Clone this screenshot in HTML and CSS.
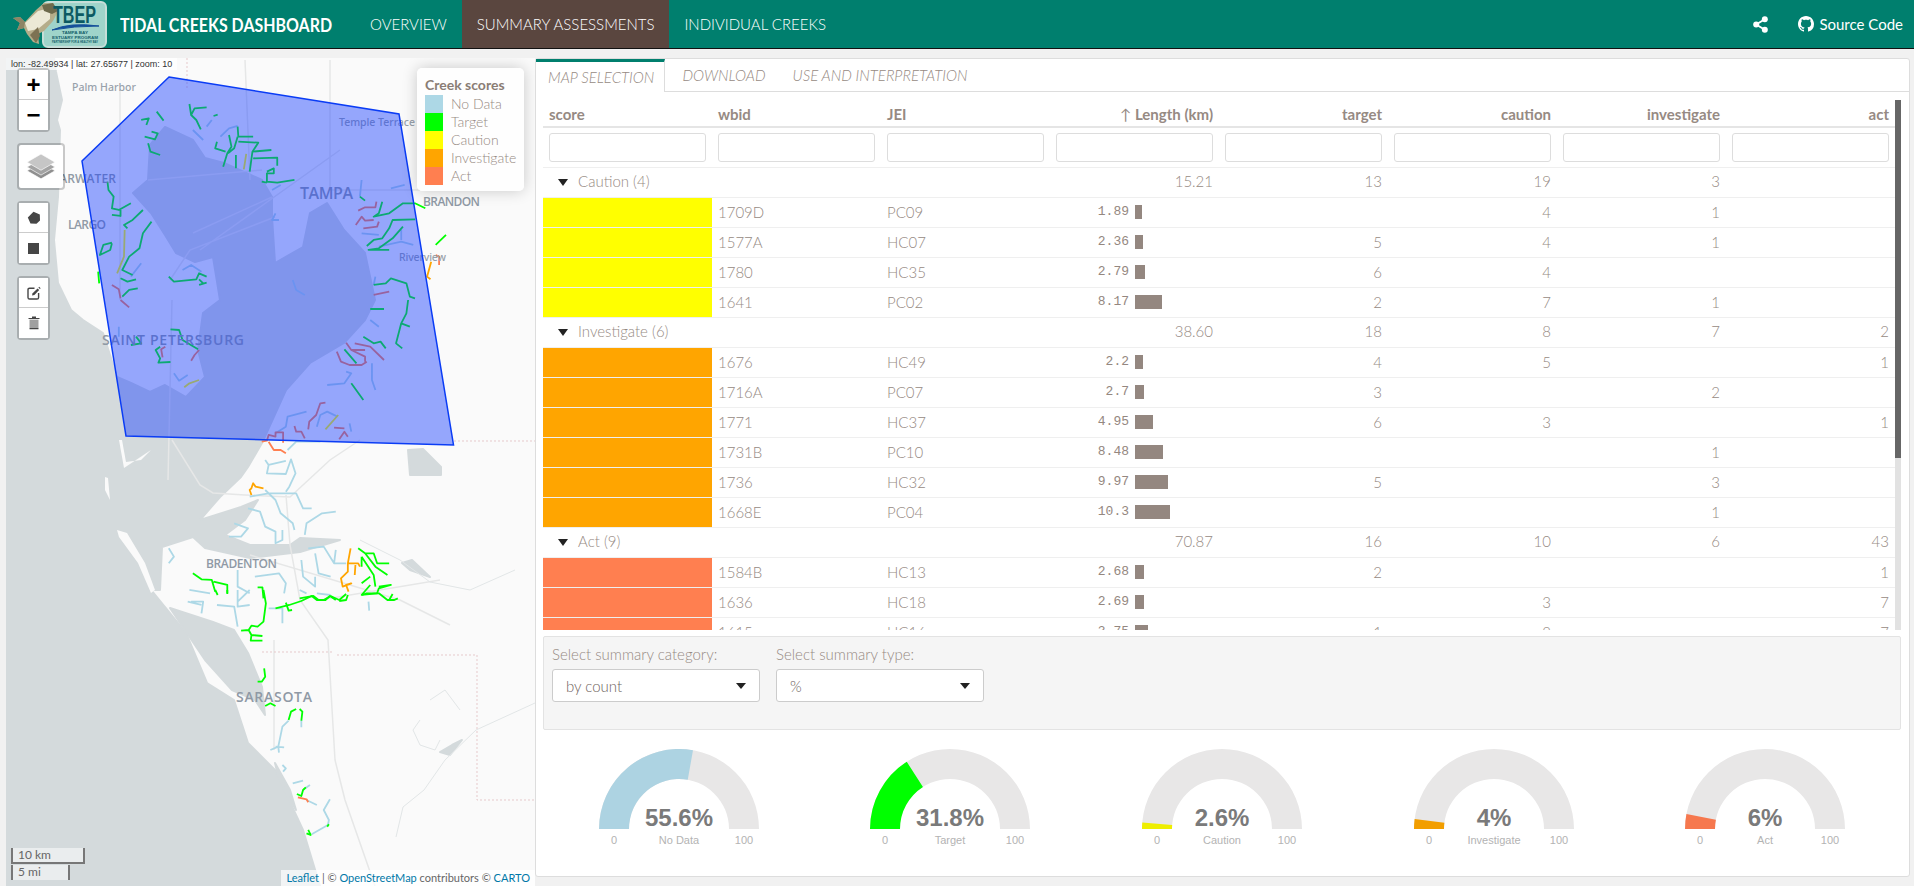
FILE: index.html
```html
<!DOCTYPE html>
<html lang="en">
<head>
  <meta charset="UTF-8" />
  <meta name="viewport" content="width=device-width, initial-scale=1.0" />
  <title>Tidal Creeks Dashboard</title>
  <link rel="stylesheet" href="styles.css">
</head>
<body>

  <!-- Top bar -->
  <nav class="navbar">
    <svg class="logo" viewBox="0 0 110 48" aria-label="TBEP logo">
      <rect x="43" y="2" width="63" height="45" rx="5" fill="#9fd4ca" stroke="#c6ded8" stroke-width="2"/>
      <path d="M13 18 L20 17 L25 22 L36 10 L44 3 L53 3 L58 11 L53 21 L44 31 L38 34 L39 44 L33 42 L27 34 L24 28 L17 30 L20 23 Z" fill="#b5ad8a"/>
      <path d="M25 23 L38 11 L50 8 L50 19 L38 29 L28 31 Z" fill="#ece9d6"/>
      <path d="M42 5 L53 3 L58 11 L52 14 L44 11 Z" fill="#6d6a4c"/>
      <path d="M30 35 L38 27 L40 36 L36 43 Z" fill="#7d7252"/>
      <path d="M13 18 L20 17 L25 22 L24 28 L17 30 L20 23 Z" fill="#8d8566"/>
      <text class="logo-big" x="53" y="23" textLength="43" lengthAdjust="spacingAndGlyphs">TBEP</text>
      <path d="M52 30 Q70 22 99 26 Q74 26 52 30 Z" fill="#14509a" stroke="#14509a"/>
      <text class="logo-small" x="62" y="33.5" textLength="26" lengthAdjust="spacingAndGlyphs">TAMPA BAY</text>
      <text class="logo-small" x="52" y="38.5" textLength="46" lengthAdjust="spacingAndGlyphs">ESTUARY PROGRAM</text>
      <text class="logo-tiny" x="52" y="43" textLength="46" lengthAdjust="spacingAndGlyphs">PARTNERSHIP FOR A HEALTHY BAY</text>
    </svg>
    <span class="brand">TIDAL CREEKS DASHBOARD</span>
    <ul class="nav-links">
      <li>OVERVIEW</li>
      <li class="active">SUMMARY ASSESSMENTS</li>
      <li>INDIVIDUAL CREEKS</li>
    </ul>
    <div class="nav-right">
      <svg class="share-icon" viewBox="0 0 16 18">
        <circle cx="12.6" cy="3.4" r="3.2"/><circle cx="3.4" cy="9" r="3.2"/><circle cx="12.6" cy="14.6" r="3.2"/>
        <path d="M12.6 3.4 L3.4 9 L12.6 14.6" fill="none" stroke="#fff" stroke-width="2"/>
      </svg>
      <span class="source">
        <svg class="github-icon" viewBox="0 0 16 16">
          <path d="M8 0C3.58 0 0 3.58 0 8c0 3.54 2.29 6.53 5.47 7.59.4.07.55-.17.55-.38 0-.19-.01-.82-.01-1.49-2.01.37-2.53-.49-2.69-.94-.09-.23-.48-.94-.82-1.13-.28-.15-.68-.52-.01-.53.63-.01 1.08.58 1.23.82.72 1.21 1.87.87 2.33.66.07-.52.28-.87.51-1.07-1.78-.2-3.64-.89-3.64-3.95 0-.87.31-1.59.82-2.15-.08-.2-.36-1.02.08-2.12 0 0 .67-.21 2.2.82.64-.18 1.32-.27 2-.27s1.36.09 2 .27c1.53-1.04 2.2-.82 2.2-.82.44 1.1.16 1.92.08 2.12.51.56.82 1.27.82 2.15 0 3.07-1.87 3.75-3.65 3.95.29.25.54.73.54 1.48 0 1.07-.01 1.93-.01 2.2 0 .21.15.46.55.38A8.01 8.01 0 0 0 16 8c0-4.42-3.58-8-8-8z"/>
        </svg>
        Source Code
      </span>
    </div>
  </nav>

  <div class="layout">

    <!-- Map -->
    <section class="map">
      <svg class="map-canvas" viewBox="6 58 529 828" preserveAspectRatio="none">
        <rect class="land" x="6" y="58" width="529" height="828"/>

        <!-- water -->
        <path class="water" d="M6 58 L54 58 L56 72 L62 100 L57 120 L60 130 L58 197 L54 240 L58 283 L71 310 L83 320 L103 333 L117 377 L131 383 L150 392 L165 385 L186 397 L205 377 L198 350 L203 313 L220 300 L213 257 L195 262 L176 253 L165 235 L151 213 L133 193 L148 180 L150 145 L165 127 L193 140 L205 158 L224 163 L262 180 L272 197 L272 217 L275 263 L303 247 L310 213 L327 203 L344 230 L365 253 L375 300 L365 320 L344 343 L310 363 L286 390 L262 443 L248 467 L241 477 L220 497 L200 520 L241 507 L258 500 L245 520 L225 535 L250 545 L290 545 L300 538 L340 540 L300 552 L250 558 L205 548 L193 537 L162 547 L160 590 L151 590 L186 633 L207 683 L234 700 L248 743 L275 770 L303 830 L320 886 L6 886 Z"/>
        <path class="water" d="M170 608 L213 622 L234 630 L248 653 L262 687 L265 715 L255 700 L232 690 L205 660 Z"/>
        <path class="water" d="M275 763 L290 790 L296 810 L290 800 L278 775 Z"/>
        <path class="water" d="M408 450 L423 449 L441 467 L441 475 L410 475 Z"/>
        <path class="water" d="M402 563 L412 560 L430 577 L410 570 Z"/>
        <path class="water" d="M440 752 L452 745 L462 740 L450 755 Z"/>

        <!-- islands -->
        <path class="land" d="M117 530 L127 533 L145 563 L155 590 L151 593 L138 563 L119 537 Z"/>
        <path class="land" d="M119 440 L124 468 L151 450 L141 460 L126 462 L122 440 Z"/>
        <path class="land" d="M105 477 L108 478 L110 500 L105 490 Z"/>
        <path class="land" d="M92 280 L100 300 L115 340 L120 375 L118 375 L110 340 L96 300 Z"/>

        <!-- roads and boundaries -->
        <g class="road">
          <path d="M168 480 L172 300 M172 440 L200 485 L213 493 L245 495 L290 497 L330 460 L360 440 M286 495 L290 545 L300 600 L328 640 L335 760 L345 800 L375 886"/>
          <path d="M274 640 L274 750 M250 555 L400 600 L450 625 M320 600 L440 580"/>
          <path d="M148 180 L262 170 M193 233 L272 197 M170 280 L190 250 L275 217 M120 90 L120 300 M245 60 L250 180 M330 60 L330 190 L420 190 M200 250 L340 150"/>
        </g>
        <path class="river" d="M396 837 L403 807 L424 790 L445 760 L476 730 L535 703 M360 540 L400 560 L430 582 L470 590 L515 570"/>
        <path class="river" d="M420 720 L413 730 L420 745 L435 750 L440 740 M430 700 L445 690 L460 710"/>
        <path class="border" d="M262 652 L333 652 M337 655 L477 655 L477 800 L535 800 M454 441 L535 441 M187 58 L187 90"/>

        <!-- creeks, north part -->
        <g class="z1">
          <path class="c-none" d="M1050 540 L1045 590 M1135 565 L1175 555 M640 410 L665 385 L690 378 M800 640 L790 660 L810 660 M850 840 L860 870 L885 885 M530 810 L555 795 L585 815 M410 790 L380 830 M1050 700 L1100 705 M1090 830 L1085 855 M1165 690 L1165 720 M1100 740 L1165 725 L1200 735 M600 380 L615 360 M560 390 L590 420 M790 570 L815 555"/>
          <path class="c-target" d="M550 312 L555 345 L570 360 L583 388 M555 345 L565 325 L600 322 M620 348 L632 344 M410 360 L432 355 L425 375 M455 335 L475 362 M420 410 L450 418 L458 400 L440 395 M430 430 L437 455 L465 465 M690 380 L692 410 L735 410 M692 425 L750 428 L733 455 L788 450 M733 455 L725 515 M735 475 L805 473 L805 497 M665 405 L672 440 L660 460 L648 500 M690 410 L680 445 L662 460 M630 425 L625 445 L655 455 M685 465 L685 505 M775 515 L795 505 L795 520 L775 520 L775 545 L805 548 L855 540 M760 545 L775 548 M312 545 L315 570 L330 590 L325 625 L345 630 L380 610 M350 630 L350 648 L325 645 M415 630 L385 660 L360 675 L370 685 M440 665 L415 700 L405 745 L375 770 L355 810 L385 825 M325 728 L300 735 L290 765 L320 750 L325 730 M285 815 L288 850 M490 830 L505 845 L570 838 L578 820 L600 830 M578 838 L590 850 M578 855 L600 848 M350 835 L370 845 L395 838 M355 890 L375 870 L400 865 M1110 605 L1100 640 L1085 650 L1130 640 L1170 610 L1205 610 L1235 625 M1205 658 L1140 660 L1130 685 L1110 715 L1085 720 L1065 738 M1170 680 L1140 715 L1100 745 L1070 750 L1130 750 M1085 855 L1120 850 L1135 835 L1180 850 L1190 890 L1205 895 M1265 735 L1295 705 M1045 590 L1060 602"/>
          <path class="c-caution" d="M715 462 L708 508 M362 690 L360 770 L340 820"/>
          <path class="c-inv" d="M1252 785 L1240 830 L1250 838"/>
          <path class="c-act" d="M1040 632 L1060 622 L1090 622 L1093 605 M1033 675 L1050 650 L1060 662 L1085 660 M1055 685 L1095 680 L1100 665 M1085 885 L1130 875 M325 855 L345 868 L350 895 M1265 765 L1275 770 L1275 795"/>
        </g>

        <!-- creeks, middle part -->
        <g class="z6">
          <path class="c-none" d="M345 80 L345 110 M505 220 L520 242 L545 225 M1005 215 L1020 220 L1000 250 L950 255 M1075 60 L1100 80 M1080 190 L1080 240 L1090 270 M920 380 L930 345 L950 335 L980 350 M890 335 L835 350 L830 380 L800 400 M835 450 L860 425 L930 425 M770 480 L780 495 L830 483 M780 495 L775 520 L830 522 L845 478 L858 520 L840 560 L830 575 M725 590 L780 580 L830 580 L860 580 L880 625 L905 625 M770 570 L800 600 L815 640 L850 670 L855 690 M720 625 L755 635 L770 680 L800 695 L800 730 L820 720 L820 690 M885 705 L890 670 L935 640 L975 635 M665 710 L700 710 L720 685 L680 670 M490 745 L505 770 L490 790 M875 780 L880 830 L915 860 L915 830 M895 745 L940 740 L970 790 L975 750 M915 760 L925 820 L960 830 M690 810 L690 860 L725 880 M740 830 L810 820 L830 850 L825 880 M550 870 L610 880 M970 790 L1005 790 M1015 370 L1020 395"/>
          <path class="c-target" d="M495 88 L520 90 L530 120 L575 148 M380 135 L410 130 L395 110 M465 140 L452 150 L465 175 L460 188 L495 186 M1185 0 L1180 40 L1165 70 L1150 130 L1168 145 M1165 70 L1190 80 M1075 27 L1115 27 M1055 110 L1085 130 L1105 125 L1120 145 M1000 148 L1035 190 M1020 250 L1055 300 M1040 745 L1060 760 L1085 760 L1095 790 L1130 790 M1050 770 L1050 800 M1060 760 L1090 800 L1125 825 M1050 770 L1085 825 L1090 860 M1075 830 L1050 850 M1100 860 L1135 855 L1100 865 L1095 880 L1050 885 L1075 855 M560 820 L585 838 L615 840 L625 875 M620 845 L660 855 L660 880 M748 862 L762 862 L765 895 M870 895 L910 888 L925 900 M940 900 L960 888 L985 900 L1005 882"/>
          <path class="c-caution" d="M945 388 L982 345 M535 262 L550 250 L578 240"/>
          <path class="c-inv" d="M765 565 L742 560 L735 550 L730 565 L725 570 L730 585 M1018 745 L1010 790 L1040 790 L1045 800 M1032 795 L1030 825 M1010 790 L1010 815 L990 835 L995 860 L1020 850 L1005 855 L1012 875"/>
          <path class="c-act" d="M350 0 L375 22 M480 140 L468 148 L472 172 M578 150 L565 165 L555 182 M978 155 L990 185 L1015 195 L1050 195 L1065 185 M945 308 L930 310 L918 345 L898 365 L895 388 M1005 128 L1020 150 L1060 150 M1030 130 L1075 140 L1115 180 M1020 150 L1060 170 L1060 185 M855 378 L860 395 L875 395 L885 415 M970 383 L1000 385 M985 418 L1000 395 L1010 410 M760 425 L775 422 L780 405 L800 410 L800 397 L822 397 L822 428 M780 425 L795 450 L815 450 L830 460"/>
        </g>

        <!-- creeks, south part -->
        <g class="z7">
          <path class="c-none" d="M555 35 L590 35 L585 70 M545 35 L585 45 M630 45 L680 50 L690 110 M690 0 L690 50 L725 45 M725 0 L690 35 M780 55 L820 55 L820 100 M870 0 L890 10 M920 10 L960 15 M838 392 L820 410 L808 470 L785 480 M800 470 L825 472 M808 470 L810 488 M875 390 L875 412 M820 525 L830 535 L822 545 M850 580 L880 572 M900 585 L882 598 M890 630 L920 645 M958 628 L940 660 L955 690 L952 705 L905 733 M1070 35 L1072 62"/>
          <path class="c-target" d="M625 0 L632 15 M660 0 L660 12 M765 0 L772 40 L765 95 L748 110 L730 107 L722 120 L700 122 M722 120 L730 135 L762 138 M730 135 L728 152 L762 152 M830 38 L838 62 L848 60 M800 55 L840 45 L875 33 L905 18 L920 30 L945 30 L958 18 L975 30 M985 33 L1005 30 L1010 15 M1050 15 L1065 10 L1100 10 L1125 30 L1145 30 L1155 25 M1130 30 L1140 12 M767 235 L770 260 L760 275 L748 275 M770 348 L785 340 L800 348 M860 357 L845 365 L838 390 M870 357 L878 365 L875 392 M862 612 L875 618 L880 600 L888 592 M890 730 L902 735 L895 720 M950 710 L955 703"/>
          <path class="c-act" d="M865 622 L890 628 L895 637"/>
        </g>

        <!-- place names -->
        <text class="place" x="72" y="91" textLength="64">Palm Harbor</text>
        <text class="place" x="339" y="126" textLength="76">Temple Terrace</text>
        <text class="place caps" x="38" y="183" textLength="78">CLEARWATER</text>
        <text class="place caps" x="68" y="229" textLength="38">LARGO</text>
        <text class="place caps tampa" x="300" y="199" textLength="53">TAMPA</text>
        <text class="place caps" x="423" y="206" textLength="57">BRANDON</text>
        <text class="place" x="399" y="261" textLength="47">Riverview</text>
        <text class="place caps big" x="102" y="345" textLength="142">SAINT PETERSBURG</text>
        <text class="place caps" x="206" y="568" textLength="71">BRADENTON</text>
        <text class="place caps big" x="236" y="702" textLength="76">SARASOTA</text>

        <!-- selection drawn on the map -->
        <polygon class="selection" points="169,77 399,114 453.5,445 126,436 82,161"/>
      </svg>

      <div class="coords">lon: -82.49934 | lat: 27.65677 | zoom: 10</div>

      <div class="map-controls">
        <div class="ctrl-bar">
          <button class="ctrl-btn zoom-btn">+</button>
          <button class="ctrl-btn zoom-btn">&minus;</button>
        </div>
        <div class="ctrl-bar layers-btn">
          <svg viewBox="0 0 26 26" width="28" height="28">
            <path d="M13 9 L26 16.5 L13 24 L0 16.5 Z" fill="#8f8f8f" stroke="#fff" stroke-width=".6"/>
            <path d="M13 5.5 L26 13 L13 20.5 L0 13 Z" fill="#a3a3a3" stroke="#fff" stroke-width=".6"/>
            <path d="M13 1 L26 8.5 L13 16 L0 8.5 Z" fill="#c6c6c6" stroke="#fff" stroke-width=".6"/>
          </svg>
        </div>
        <div class="ctrl-bar">
          <div class="ctrl-btn">
            <svg viewBox="0 0 14 14" width="14" height="14"><path d="M6.5 .8 L12.8 3.4 L13 9.5 L9.5 12.8 L3.5 12.6 L.8 6.5 Z" fill="#464646"/></svg>
          </div>
          <div class="ctrl-btn">
            <svg viewBox="0 0 11 11" width="11" height="11"><rect width="11" height="11" fill="#464646"/></svg>
          </div>
        </div>
        <div class="ctrl-bar">
          <div class="ctrl-btn">
            <svg viewBox="0 0 14 14" width="14" height="14">
              <path d="M7.5 2.2 H2.6 Q1 2.2 1 3.8 V11.4 Q1 13 2.6 13 H10 Q11.6 13 11.6 11.4 V7" fill="none" stroke="#464646" stroke-width="1.4"/>
              <path d="M5 9.6 L5.6 7.2 L10.6 2.4 L12.2 4 L7.4 9 Z" fill="#464646"/>
              <path d="M11.4 1.6 L12.2 .8 L13.6 2.2 L12.9 3 Z" fill="#464646"/>
            </svg>
          </div>
          <div class="ctrl-btn">
            <svg viewBox="0 0 12 14" width="12" height="14">
              <path d="M1.5 3.6 H10.5 V12 H1.5 Z" fill="#a0a0a0"/>
              <path d="M.5 2 H11.5 V3 H.5 Z M4 .4 H8 V2 H4 Z M1.5 12 H10.5 V13.2 H1.5 Z" fill="#464646"/>
            </svg>
          </div>
        </div>
      </div>

      <div class="legend">
        <div class="legend-title">Creek scores</div>
        <div class="legend-row"><i class="sw-none"></i>No Data</div>
        <div class="legend-row"><i class="sw-target"></i>Target</div>
        <div class="legend-row"><i class="sw-caution"></i>Caution</div>
        <div class="legend-row"><i class="sw-inv"></i>Investigate</div>
        <div class="legend-row"><i class="sw-act"></i>Act</div>
      </div>

      <div class="scale">
        <div class="scale-km">10 km</div>
        <div class="scale-mi">5 mi</div>
      </div>

      <div class="attribution"><a>Leaflet</a> | &copy; <a>OpenStreetMap</a> contributors &copy; <a>CARTO</a></div>
    </section>

    <!-- Right panel -->
    <section class="panel">
      <ul class="tabs">
        <li class="active">MAP SELECTION</li>
        <li>DOWNLOAD</li>
        <li>USE AND INTERPRETATION</li>
      </ul>

      <div class="table-wrap">
        <table class="scores">
          <thead>
            <tr class="head-row">
              <th>score</th><th>wbid</th><th>JEI</th>
              <th class="num"><span class="sort-arrow">&#8593;</span> Length (km)</th>
              <th class="num">target</th><th class="num">caution</th><th class="num">investigate</th><th class="num">act</th>
            </tr>
            <tr class="filter-row">
              <th><input /></th><th><input /></th><th><input /></th><th><input /></th>
              <th><input /></th><th><input /></th><th><input /></th><th><input /></th>
            </tr>
          </thead>
          <tbody>
            <tr class="group"><td colspan="3"><span class="caret"></span>Caution (4)</td><td class="num">15.21</td><td class="num">13</td><td class="num">19</td><td class="num">3</td><td class="num"></td></tr>
            <tr><td class="s-caution"></td><td>1709D</td><td>PC09</td><td><div class="len"><span>1.89</span><b style="width:7px"></b></div></td><td></td><td class="num">4</td><td class="num">1</td><td></td></tr>
            <tr><td class="s-caution"></td><td>1577A</td><td>HC07</td><td><div class="len"><span>2.36</span><b style="width:8px"></b></div></td><td class="num">5</td><td class="num">4</td><td class="num">1</td><td></td></tr>
            <tr><td class="s-caution"></td><td>1780</td><td>HC35</td><td><div class="len"><span>2.79</span><b style="width:10px"></b></div></td><td class="num">6</td><td class="num">4</td><td></td><td></td></tr>
            <tr><td class="s-caution"></td><td>1641</td><td>PC02</td><td><div class="len"><span>8.17</span><b style="width:27px"></b></div></td><td class="num">2</td><td class="num">7</td><td class="num">1</td><td></td></tr>

            <tr class="group"><td colspan="3"><span class="caret"></span>Investigate (6)</td><td class="num">38.60</td><td class="num">18</td><td class="num">8</td><td class="num">7</td><td class="num">2</td></tr>
            <tr><td class="s-inv"></td><td>1676</td><td>HC49</td><td><div class="len"><span>2.2</span><b style="width:8px"></b></div></td><td class="num">4</td><td class="num">5</td><td></td><td class="num">1</td></tr>
            <tr><td class="s-inv"></td><td>1716A</td><td>PC07</td><td><div class="len"><span>2.7</span><b style="width:9px"></b></div></td><td class="num">3</td><td></td><td class="num">2</td><td></td></tr>
            <tr><td class="s-inv"></td><td>1771</td><td>HC37</td><td><div class="len"><span>4.95</span><b style="width:18px"></b></div></td><td class="num">6</td><td class="num">3</td><td></td><td class="num">1</td></tr>
            <tr><td class="s-inv"></td><td>1731B</td><td>PC10</td><td><div class="len"><span>8.48</span><b style="width:28px"></b></div></td><td></td><td></td><td class="num">1</td><td></td></tr>
            <tr><td class="s-inv"></td><td>1736</td><td>HC32</td><td><div class="len"><span>9.97</span><b style="width:33px"></b></div></td><td class="num">5</td><td></td><td class="num">3</td><td></td></tr>
            <tr><td class="s-inv"></td><td>1668E</td><td>PC04</td><td><div class="len"><span>10.3</span><b style="width:35px"></b></div></td><td></td><td></td><td class="num">1</td><td></td></tr>

            <tr class="group"><td colspan="3"><span class="caret"></span>Act (9)</td><td class="num">70.87</td><td class="num">16</td><td class="num">10</td><td class="num">6</td><td class="num">43</td></tr>
            <tr><td class="s-act"></td><td>1584B</td><td>HC13</td><td><div class="len"><span>2.68</span><b style="width:9px"></b></div></td><td class="num">2</td><td></td><td></td><td class="num">1</td></tr>
            <tr><td class="s-act"></td><td>1636</td><td>HC18</td><td><div class="len"><span>2.69</span><b style="width:9px"></b></div></td><td></td><td class="num">3</td><td></td><td class="num">7</td></tr>
            <tr><td class="s-act"></td><td>1615</td><td>HC16</td><td><div class="len"><span>3.75</span><b style="width:13px"></b></div></td><td class="num">1</td><td class="num">2</td><td></td><td class="num">7</td></tr>
          </tbody>
        </table>
        <div class="scroll-track"><div class="scroll-thumb"></div></div>
      </div>

      <div class="well">
        <div class="field">
          <label>Select summary category:</label>
          <div class="select">by count<span class="caret"></span></div>
        </div>
        <div class="field">
          <label>Select summary type:</label>
          <div class="select">%<span class="caret"></span></div>
        </div>
      </div>

      <div class="gauges">
        <svg class="gauge" viewBox="-20 0 200 100">
          <path class="g-bg" d="M0 80 A80 80 0 0 1 160 80 H130 A50 50 0 0 0 30 80 Z"/>
          <path fill="#add3e2" d="M0 80 A80 80 0 0 1 94 1.23 L88.75 30.77 A50 50 0 0 0 30 80 Z"/>
          <text class="g-val" x="80" y="77">55.6%</text>
          <text class="g-lab" x="15" y="95">0</text><text class="g-lab" x="80" y="95">No Data</text><text class="g-lab" x="145" y="95">100</text>
        </svg>
        <svg class="gauge" viewBox="-20 0 200 100">
          <path class="g-bg" d="M0 80 A80 80 0 0 1 160 80 H130 A50 50 0 0 0 30 80 Z"/>
          <path fill="#00ff00" d="M0 80 A80 80 0 0 1 36.7 12.7 L52.95 37.95 A50 50 0 0 0 30 80 Z"/>
          <text class="g-val" x="80" y="77">31.8%</text>
          <text class="g-lab" x="15" y="95">0</text><text class="g-lab" x="80" y="95">Target</text><text class="g-lab" x="145" y="95">100</text>
        </svg>
        <svg class="gauge" viewBox="-20 0 200 100">
          <path class="g-bg" d="M0 80 A80 80 0 0 1 160 80 H130 A50 50 0 0 0 30 80 Z"/>
          <path fill="#eeee00" d="M0 80 A80 80 0 0 1 .27 73.47 L30.17 75.92 A50 50 0 0 0 30 80 Z"/>
          <text class="g-val" x="80" y="77">2.6%</text>
          <text class="g-lab" x="15" y="95">0</text><text class="g-lab" x="80" y="95">Caution</text><text class="g-lab" x="145" y="95">100</text>
        </svg>
        <svg class="gauge" viewBox="-20 0 200 100">
          <path class="g-bg" d="M0 80 A80 80 0 0 1 160 80 H130 A50 50 0 0 0 30 80 Z"/>
          <path fill="#f29e00" d="M0 80 A80 80 0 0 1 .63 69.97 L30.4 73.73 A50 50 0 0 0 30 80 Z"/>
          <text class="g-val" x="80" y="77">4%</text>
          <text class="g-lab" x="15" y="95">0</text><text class="g-lab" x="80" y="95">Investigate</text><text class="g-lab" x="145" y="95">100</text>
        </svg>
        <svg class="gauge" viewBox="-20 0 200 100">
          <path class="g-bg" d="M0 80 A80 80 0 0 1 160 80 H130 A50 50 0 0 0 30 80 Z"/>
          <path fill="#f6784e" d="M0 80 A80 80 0 0 1 1.42 65 L30.89 70.63 A50 50 0 0 0 30 80 Z"/>
          <text class="g-val" x="80" y="77">6%</text>
          <text class="g-lab" x="15" y="95">0</text><text class="g-lab" x="80" y="95">Act</text><text class="g-lab" x="145" y="95">100</text>
        </svg>
      </div>
    </section>

  </div>

</body>
</html>
```

FILE: styles.css
```css
* {
  box-sizing: border-box;
}

html, body {
  height: 100%;
}

body {
  margin: 0;
  background: #f1f1f1;
  font-family: "Lato", "Liberation Sans", sans-serif;
  font-weight: 300;
  font-size: 15px;
  color: #968a83;
  overflow: hidden;
}

/* Top bar */
.navbar {
  height: 49px;
  display: flex;
  align-items: center;
  background: #007f6e;
  border-bottom: 1px solid #111;
  color: #fff;
}

.logo {
  width: 110px;
  height: 48px;
  flex: none;
}

.logo-big {
  font: bold 23px "Liberation Sans", sans-serif;
  fill: #0c5a62;
}

.logo-small {
  font: bold 4px "Liberation Sans", sans-serif;
  fill: #14606a;
}

.logo-tiny {
  font: bold 3px "Liberation Sans", sans-serif;
  fill: #14606a;
}

.brand {
  margin-left: 10px;
  width: 210px;
  flex: none;
  font-weight: 700;
  font-size: 19px;
  white-space: nowrap;
  transform: scaleX(.84);
  transform-origin: left center;
}

.nav-links {
  list-style: none;
  display: flex;
  margin: 0 0 0 25px;
  padding: 0;
  height: 48px;
}

.nav-links li {
  display: flex;
  align-items: center;
  padding: 0 15px;
  font-size: 15px;
  white-space: nowrap;
}

.nav-links li.active {
  background: #5a463f;
}

.nav-right {
  margin-left: auto;
  display: flex;
  align-items: center;
  gap: 30px;
  padding-right: 11px;
}

.share-icon {
  width: 15px;
  height: 17px;
  fill: #fff;
}

.source {
  display: flex;
  align-items: center;
  gap: 5px;
  font-size: 15px;
  font-weight: 400;
}

.github-icon {
  width: 16px;
  height: 16px;
  fill: #fff;
}

/* Page columns */
.layout {
  display: flex;
  height: 837px;
  padding: 9px 4px 0 6px;
}

/* Map */
.map {
  position: relative;
  width: 529px;
  height: 828px;
  flex: none;
  overflow: hidden;
}

.map-canvas {
  display: block;
  width: 100%;
  height: 100%;
}

.land {
  fill: #fafafa;
}

.water {
  fill: #d4dadc;
  stroke: #d4dadc;
  stroke-width: 2;
  stroke-linejoin: round;
}

.road path,
.river,
.border,
.z1 path,
.z6 path,
.z7 path {
  fill: none;
  vector-effect: non-scaling-stroke;
}

.road path {
  stroke: #e6e7e7;
  stroke-width: 1.5;
}

.river {
  stroke: #e2e6e7;
  stroke-width: 1;
}

.border {
  stroke: #e6c9cb;
  stroke-width: 1;
  stroke-dasharray: 2 2;
}

.z1 {
  transform: scale(.3444, .3333);
}

.z6 {
  transform: translate(0, 300px) scale(.3444, .3333);
}

.z7 {
  transform: translate(0, 590px) scale(.3444, .3333);
}

.z1 path,
.z6 path,
.z7 path {
  stroke-width: 1.8;
  stroke-linejoin: round;
}

.c-none { stroke: #add8e6; }
.c-target { stroke: #00ff00; }
.c-caution { stroke: #ffff00; }
.c-inv { stroke: #ffa500; }
.c-act { stroke: #ff7f50; }

.place {
  font-family: "Noto Sans", "Liberation Sans", sans-serif;
  font-weight: 500;
  font-size: 10.5px;
  fill: #98a1aa;
}

.caps {
  font-family: "Open Sans", "Liberation Sans", sans-serif;
  font-weight: 600;
  font-size: 12px;
  fill: #8f99a5;
}

.big {
  font-size: 14px;
}

.tampa {
  font-size: 16px;
}

.selection {
  fill: #1a40ff;
  fill-opacity: .45;
  stroke: #0a3cf5;
  stroke-width: 1.5;
}

.coords {
  position: absolute;
  top: 0;
  left: 0;
  padding: 0 5px;
  height: 12px;
  line-height: 12px;
  background: rgba(255, 255, 255, .7);
  font-family: "Liberation Sans", sans-serif;
  font-weight: 400;
  font-size: 9px;
  color: #333;
}

.map-controls {
  position: absolute;
  top: 10px;
  left: 11px;
  display: flex;
  flex-direction: column;
  align-items: flex-start;
  gap: 11px;
}

.ctrl-bar {
  background: #fff;
  border: 2px solid rgba(0, 0, 0, .2);
  border-radius: 4px;
  background-clip: padding-box;
}

.ctrl-btn {
  display: flex;
  align-items: center;
  justify-content: center;
  width: 29px;
  height: 30px;
  padding: 0;
  background: #fff;
  border: 0;
  border-bottom: 1px solid #ccc;
  font-family: "Liberation Sans", sans-serif;
}

.ctrl-btn:last-child {
  border-bottom: 0;
}

.zoom-btn {
  font-size: 24px;
  font-weight: 700;
  color: #000;
}

.layers-btn {
  display: flex;
  align-items: center;
  justify-content: center;
  width: 48px;
  height: 47px;
}

.legend {
  position: absolute;
  top: 10px;
  left: 411px;
  width: 107px;
  height: 123px;
  padding: 6px 8px;
  background: rgba(255, 255, 255, .8);
  border-radius: 5px;
  box-shadow: 0 0 15px rgba(0, 0, 0, .2);
  font-size: 14px;
  line-height: 18px;
}

.legend-title {
  font-weight: 700;
  line-height: 21px;
  color: #8a7d75;
}

.legend-row {
  display: flex;
  height: 18px;
  white-space: nowrap;
}

.legend-row i {
  width: 18px;
  height: 18px;
  margin-right: 8px;
  flex: none;
}

.sw-none { background: #add8e6; }
.sw-target { background: #00ff00; }
.sw-caution { background: #ffff00; }
.sw-inv { background: #ffa500; }
.sw-act { background: #ff7f50; }

.scale {
  position: absolute;
  left: 5px;
  bottom: 6px;
  font-size: 12px;
  font-weight: 400;
  color: #666;
}

.scale div {
  height: 16px;
  line-height: 14px;
  padding-left: 5px;
  background: rgba(255, 255, 255, .5);
  border: 2px solid #777;
  border-top: 0;
}

.scale-km {
  width: 74px;
}

.scale .scale-mi {
  width: 59px;
  height: 15px;
  margin-top: 1px;
  border-bottom: 0;
}

.attribution {
  position: absolute;
  right: 0;
  bottom: 0;
  height: 16px;
  line-height: 16px;
  padding: 0 5px;
  background: rgba(255, 255, 255, .7);
  font-size: 11px;
  font-weight: 400;
  color: #666;
  white-space: nowrap;
}

.attribution a {
  color: #0078a8;
}

/* Right panel */
.panel {
  flex: 1;
  height: 819px;
  background: #fff;
  border: 1px solid #ddd;
  border-radius: 3px;
  padding-left: 7px;
  padding-right: 8px;
}

.tabs {
  list-style: none;
  display: flex;
  height: 33px;
  margin: 0 -8px 0 -7px;
  padding: 0;
  border-bottom: 1px solid #ddd;
}

.tabs li {
  display: flex;
  align-items: center;
  padding: 0 10px 0 17px;
  font-style: italic;
  white-space: nowrap;
}

.tabs li.active {
  padding-left: 12px;
  margin-bottom: -1px;
  background: #fff;
  border-top: 3px solid #007f6e;
  border-right: 1px solid #ddd;
}

.table-wrap {
  position: relative;
  height: 538px;
  overflow: hidden;
}

.scores {
  width: 1352px;
  table-layout: fixed;
  border-collapse: collapse;
}

.scores th {
  padding: 0 6px;
  font-weight: 700;
  text-align: left;
}

.scores .num {
  text-align: right;
}

.head-row th {
  height: 35px;
  padding-top: 10px;
  border-bottom: 2px solid #e5e5e5;
}

.sort-arrow {
  font-weight: 400;
  font-size: 15px;
}

.filter-row th {
  height: 39px;
  padding-top: 5px;
  padding-bottom: 5px;
}

.filter-row input {
  display: block;
  width: 100%;
  height: 29px;
  background: #fff;
  border: 1px solid #ddd;
  border-radius: 3px;
}

.scores td {
  height: 30px;
  padding: 0 6px 2px;
  border-top: 1px solid #efefef;
  white-space: nowrap;
}

.group td {
  padding-bottom: 4px;
}

.scores .group td:first-child {
  padding-left: 15px;
}

.caret {
  display: inline-block;
  width: 0;
  height: 0;
  border-left: 5px solid transparent;
  border-right: 5px solid transparent;
  border-top: 7px solid #222;
}

.group .caret {
  margin-right: 10px;
  vertical-align: 1px;
}

.s-caution { background: #ffff00; }
.s-inv { background: #ffa500; }
.s-act { background: #ff7f50; }

.len {
  display: flex;
  align-items: center;
  gap: 6px;
}

.len span {
  width: 73px;
  text-align: right;
  font-family: "Liberation Mono", monospace;
  font-weight: 400;
  font-size: 13px;
  color: #948780;
}

.len b {
  height: 14px;
  background: #948780;
}

.scroll-track {
  position: absolute;
  top: 8px;
  right: 0;
  width: 6px;
  height: 530px;
  background: #e2e2e2;
}

.scroll-thumb {
  height: 358px;
  background: #666;
}

/* Select boxes */
.well {
  display: flex;
  gap: 16px;
  height: 94px;
  margin-top: 6px;
  padding: 7px 8px 0;
  background: #f5f5f5;
  border: 1px solid #e3e3e3;
  border-radius: 2px;
}

.field label {
  display: block;
  height: 25px;
  line-height: 20px;
}

.select {
  display: flex;
  align-items: center;
  justify-content: space-between;
  width: 208px;
  height: 33px;
  padding: 0 13px;
  background: #fff;
  border: 1px solid #ccc;
  border-radius: 3px;
  color: #6f635d;
}

.select .caret {
  border-top-width: 6px;
}

/* Gauges */
.gauges {
  display: grid;
  grid-template-columns: repeat(5, 1fr);
  justify-items: center;
  margin-top: 19px;
}

.gauge {
  display: block;
  width: 200px;
  height: 100px;
}

.g-bg {
  fill: #e8e7e7;
}

.g-val {
  font: bold 24px "Liberation Sans", sans-serif;
  fill: #7a7a7a;
  text-anchor: middle;
}

.g-lab {
  font: 11px "Liberation Sans", sans-serif;
  fill: #b3b3b3;
  text-anchor: middle;
}
```
